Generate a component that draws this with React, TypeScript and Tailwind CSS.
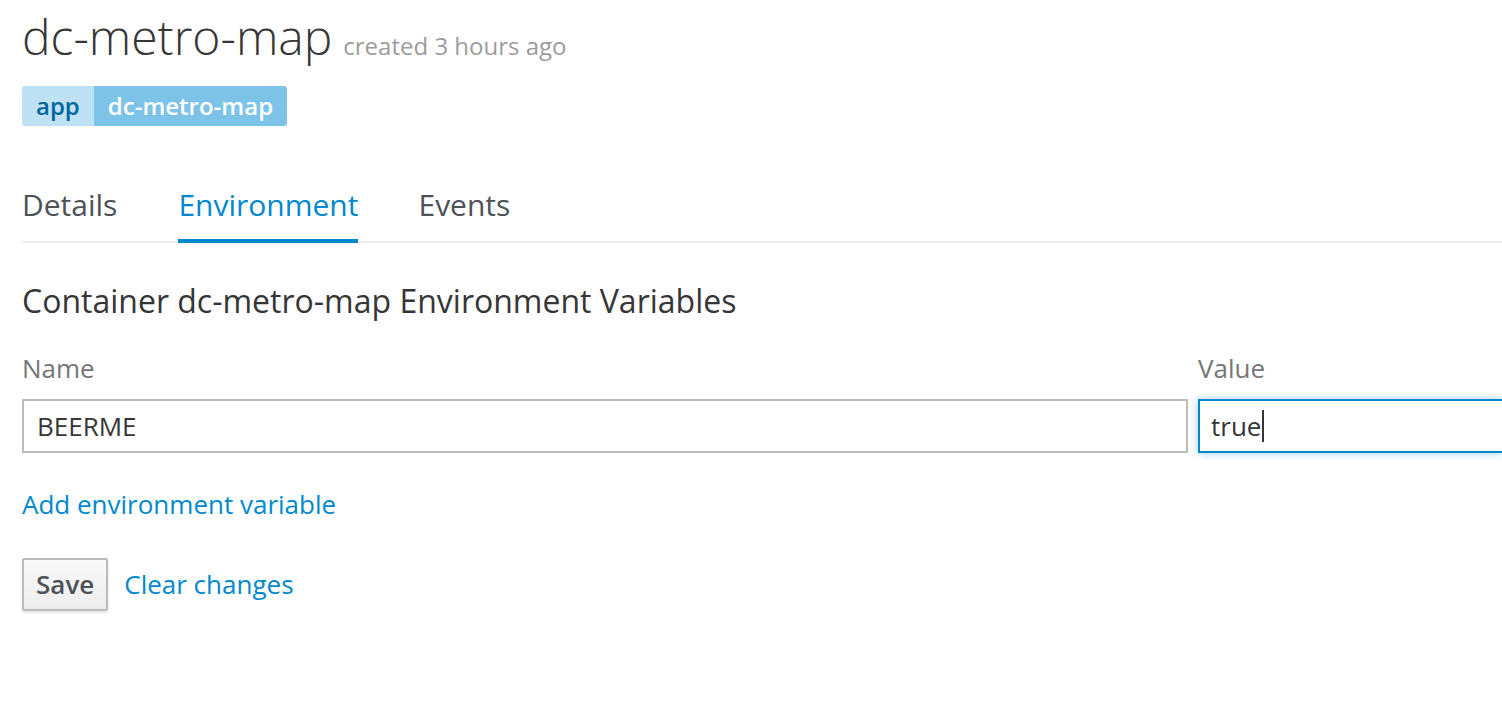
import React from "react";

const font = { fontFamily: '"Open Sans", "Noto Sans", sans-serif' };

export default function App() {
  return (
    <div className="min-h-[716px] w-[1502px] overflow-hidden bg-white pl-[22px] pt-[8px]" style={font}>
      <div className="flex items-baseline gap-[11px]">
        <h1 className="text-[48px] font-light leading-[58px] text-[#363636]">dc-metro-map</h1>
        <span className="text-[24px] text-[#9c9c9c]">created 3 hours ago</span>
      </div>

      <div className="mt-[20px] flex h-[40px] w-fit overflow-hidden rounded-[3px] text-[24px] font-semibold leading-[40px]">
        <span className="bg-[#bee1f4] px-[14px] text-[#00659c]">app</span>
        <span className="bg-[#7dc3e8] px-[14px] text-white">dc-metro-map</span>
      </div>

      <div className="mt-[58px] flex border-b-2 border-[#ededed] text-[30px] leading-[42px]">
        <div className="mr-[61px] pb-[15px] text-[#4d5258]">Details</div>
        <div className="mr-[60px] -mb-[2px] border-b-4 border-[#0088ce] pb-[13px] text-[#0088ce]">Environment</div>
        <div className="pb-[15px] text-[#4d5258]">Events</div>
      </div>

      <h2 className="mt-[38px] text-[32px] leading-[40px] text-[#363636]">
        Container dc-metro-map Environment Variables
      </h2>

      <div className="mt-[28px] flex gap-[10px] text-[26px] leading-[39px]">
        <div className="w-[1166px]">
          <div className="mb-[11px] text-[#767676]">Name</div>
          <div className="flex h-[54px] items-center border-2 border-[#bbbbbb] px-[13px] text-[#363636]">BEERME</div>
        </div>
        <div className="flex-1">
          <div className="mb-[11px] text-[#767676]">Value</div>
          <div className="flex h-[54px] items-center border-2 border-r-0 border-[#0088ce] px-[11px] text-[#363636] shadow-[0_0_8px_rgba(0,136,206,0.4)]">
            true<span className="ml-[1px] inline-block h-[32px] w-[2px] bg-[#363636]" />
          </div>
        </div>
      </div>

      <div className="mt-[32px] text-[26px] leading-[39px] text-[#0088ce]">Add environment variable</div>

      <div className="mt-[34px] flex items-center gap-[16px]">
        <button className="h-[53px] rounded-[2px] border-2 border-[#bbbbbb] bg-gradient-to-b from-[#fafafa] to-[#ededed] px-[12px] text-[26px] font-semibold text-[#4d5258] shadow-[0_2px_3px_rgba(0,0,0,0.1)]">
          Save
        </button>
        <span className="text-[26px] text-[#0088ce]">Clear changes</span>
      </div>
    </div>
  );
}
